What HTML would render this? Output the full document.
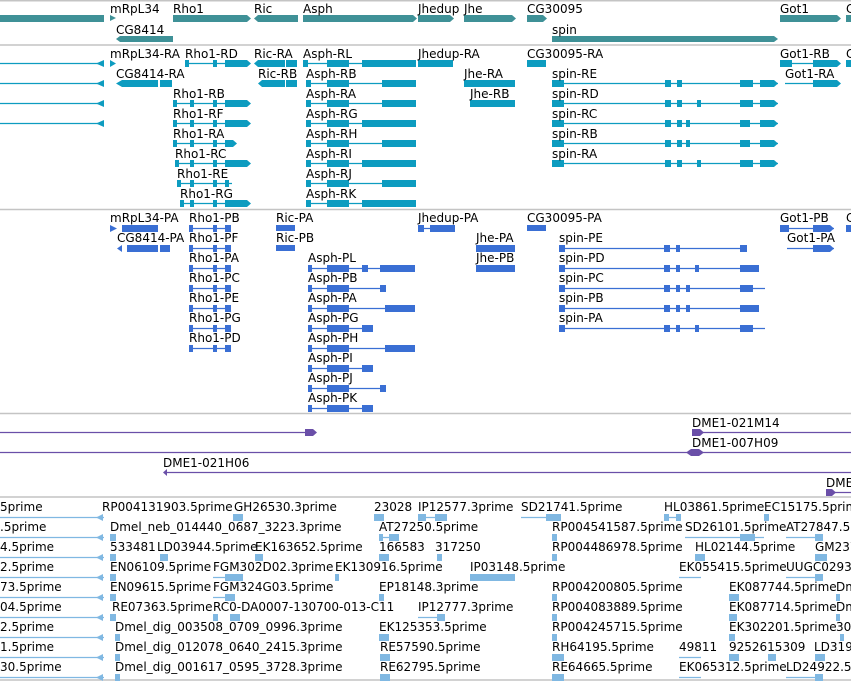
<!DOCTYPE html>
<html><head><meta charset="utf-8"><style>
html,body{margin:0;padding:0;background:#fff;width:851px;height:681px;overflow:hidden}
svg{display:block}
text{font-family:"DejaVu Sans","Liberation Sans",sans-serif;font-size:12px;fill:#000}
</style></head><body>
<svg width="851" height="681" viewBox="0 0 851 681" xmlns="http://www.w3.org/2000/svg">
<g stroke="#c4c4c4" stroke-width="1.5">
<line x1="0" y1="0.75" x2="851" y2="0.75"/><line x1="0" y1="45" x2="851" y2="45"/>
<line x1="0" y1="209.5" x2="851" y2="209.5"/><line x1="0" y1="413.5" x2="851" y2="413.5"/>
<line x1="0" y1="497" x2="851" y2="497"/><line x1="0" y1="680" x2="851" y2="680"/>
</g>
<!-- GENES -->
<g fill="#3f9197">
<rect x="0" y="15" width="104" height="7"/>
<polygon points="110,15 116,18 110,21"/>
<polygon points="173,15 247,15 251,18.5 247,22 173,22"/>
<polygon points="258,15 298,15 298,22 258,22 254,18.5"/>
<polygon points="303,15 413,15 417,18.5 413,22 303,22"/>
<polygon points="418,15 450,15 454,18.5 450,22 418,22"/>
<polygon points="464,15 512,15 516,18.5 512,22 464,22"/>
<polygon points="527,15 543,15 547,18.5 543,22 527,22"/>
<polygon points="780,15 837,15 841,18.5 837,22 780,22"/>
<rect x="846" y="15" width="5" height="7"/>
<polygon points="120,36 173,36 173,42 120,42 116,39"/>
<polygon points="552,36 774,36 778,39 774,42 552,42"/>
</g>
<text x="110" y="13">mRpL34</text><text x="173" y="13">Rho1</text><text x="254" y="13">Ric</text>
<text x="303" y="13">Asph</text><text x="418" y="13">Jhedup</text><text x="464" y="13">Jhe</text>
<text x="527" y="13">CG30095</text><text x="780" y="13">Got1</text><text x="846" y="13">C</text>
<text x="116" y="34">CG8414</text><text x="552" y="34">spin</text>
<!-- TRANSCRIPTS -->
<g stroke="#0d9cc0" stroke-width="1.2">
<line x1="0" y1="63.5" x2="102" y2="63.5"/><line x1="0" y1="83.5" x2="102" y2="83.5"/>
<line x1="0" y1="103.5" x2="102" y2="103.5"/><line x1="0" y1="123.5" x2="102" y2="123.5"/>
<line x1="185" y1="63.5" x2="250" y2="63.5"/>
<line x1="173" y1="103.5" x2="250" y2="103.5"/><line x1="173" y1="123.5" x2="250" y2="123.5"/>
<line x1="173" y1="143.5" x2="236" y2="143.5"/><line x1="175" y1="163.5" x2="250" y2="163.5"/>
<line x1="177" y1="183.5" x2="232" y2="183.5"/><line x1="180" y1="203.5" x2="250" y2="203.5"/>
<line x1="303" y1="63.5" x2="416" y2="63.5"/>
<line x1="306" y1="83.5" x2="416" y2="83.5"/><line x1="306" y1="103.5" x2="416" y2="103.5"/>
<line x1="306" y1="123.5" x2="416" y2="123.5"/><line x1="306" y1="143.5" x2="416" y2="143.5"/>
<line x1="306" y1="163.5" x2="416" y2="163.5"/><line x1="306" y1="183.5" x2="416" y2="183.5"/>
<line x1="306" y1="203.5" x2="416" y2="203.5"/>
<line x1="418" y1="63.5" x2="453" y2="63.5"/>
<line x1="464" y1="83.5" x2="515" y2="83.5"/><line x1="470" y1="103.5" x2="515" y2="103.5"/>
<line x1="527" y1="63.5" x2="546" y2="63.5"/>
<line x1="552" y1="83.5" x2="778" y2="83.5"/><line x1="552" y1="103.5" x2="778" y2="103.5"/>
<line x1="552" y1="123.5" x2="778" y2="123.5"/><line x1="552" y1="143.5" x2="778" y2="143.5"/>
<line x1="552" y1="163.5" x2="778" y2="163.5"/>
<line x1="780" y1="63.5" x2="840" y2="63.5"/><line x1="785" y1="83.5" x2="840" y2="83.5"/>
</g>
<g fill="#0d9cc0">
<polygon points="96,63.5 104,60 104,67"/><polygon points="96,83.5 104,80 104,87"/>
<polygon points="96,103.5 104,100 104,107"/><polygon points="96,123.5 104,120 104,127"/>
<polygon points="110,60 116,63.5 110,67"/>
<rect x="122" y="80" width="36" height="7"/><polygon points="116,83.5 122,80 122,87"/><rect x="160" y="80" width="12" height="7"/>
<polygon points="225,60 247,60 251,63.5 247,67 225,67"/><polygon points="225,100 247,100 251,103.5 247,107 225,107"/>
<polygon points="225,120 247,120 251,123.5 247,127 225,127"/><polygon points="225,140 233,140 237,143.5 233,147 225,147"/>
<polygon points="225,160 247,160 251,163.5 247,167 225,167"/><polygon points="225,200 247,200 251,203.5 247,207 225,207"/>
<polygon points="258,60 285,60 285,67 258,67 254,63.5"/><rect x="286" y="60" width="11" height="7"/>
<polygon points="262,80 285,80 285,87 262,87 258,83.5"/><rect x="286" y="80" width="11" height="7"/>
<rect x="418" y="60" width="35" height="7"/>
<rect x="527" y="60" width="19" height="7"/>
<rect x="464" y="80" width="51" height="7"/><rect x="470" y="100" width="45" height="7"/>
<rect x="780" y="60" width="12" height="7"/><polygon points="813,60 837,60 841,63.5 837,67 813,67"/>
<polygon points="813,80 837,80 841,83.5 837,87 813,87"/>
<rect x="846" y="60" width="5" height="7"/>
</g>
<g fill="#0d9cc0">
<!-- Asph exons -->
<rect x="303" y="60" width="5" height="7"/><rect x="327" y="60" width="22" height="7"/><rect x="362" y="60" width="54" height="7"/>
<rect x="306" y="80" width="5" height="7"/><rect x="327" y="80" width="22" height="7"/><rect x="382" y="80" width="34" height="7"/>
<rect x="306" y="100" width="5" height="7"/><rect x="327" y="100" width="22" height="7"/><rect x="382" y="100" width="34" height="7"/>
<rect x="306" y="120" width="5" height="7"/><rect x="327" y="120" width="22" height="7"/><rect x="362" y="120" width="54" height="7"/>
<rect x="306" y="140" width="5" height="7"/><rect x="327" y="140" width="22" height="7"/><rect x="382" y="140" width="34" height="7"/>
<rect x="306" y="160" width="5" height="7"/><rect x="327" y="160" width="22" height="7"/><rect x="362" y="160" width="54" height="7"/>
<rect x="306" y="180" width="5" height="7"/><rect x="327" y="180" width="22" height="7"/><rect x="382" y="180" width="34" height="7"/>
<rect x="306" y="200" width="5" height="7"/><rect x="327" y="200" width="22" height="7"/><rect x="362" y="200" width="54" height="7"/>
<!-- spin exons -->
<rect x="552" y="80" width="12" height="7"/><rect x="665" y="80" width="6" height="7"/><rect x="677" y="80" width="5" height="7"/><rect x="740" y="80" width="13" height="7"/><polygon points="760,80 774,80 778,83.5 774,87 760,87"/>
<rect x="552" y="100" width="12" height="7"/><rect x="665" y="100" width="6" height="7"/><rect x="677" y="100" width="5" height="7"/><rect x="697" y="100" width="4" height="7"/><rect x="740" y="100" width="13" height="7"/><polygon points="760,100 774,100 778,103.5 774,107 760,107"/>
<rect x="552" y="120" width="12" height="7"/><rect x="665" y="120" width="6" height="7"/><rect x="677" y="120" width="5" height="7"/><rect x="686" y="120" width="4" height="7"/><rect x="740" y="120" width="10" height="7"/><polygon points="760,120 774,120 778,123.5 774,127 760,127"/>
<rect x="552" y="140" width="12" height="7"/><rect x="665" y="140" width="6" height="7"/><rect x="677" y="140" width="5" height="7"/><rect x="686" y="140" width="4" height="7"/><rect x="740" y="140" width="10" height="7"/><polygon points="760,140 774,140 778,143.5 774,147 760,147"/>
<rect x="552" y="160" width="12" height="7"/><rect x="665" y="160" width="6" height="7"/><rect x="677" y="160" width="5" height="7"/><rect x="697" y="160" width="4" height="7"/><rect x="740" y="160" width="13" height="7"/><polygon points="760,160 774,160 778,163.5 774,167 760,167"/>
<!-- Rho exons -->
<rect x="173" y="100" width="4" height="7"/><rect x="190" y="100" width="4" height="7"/><rect x="213" y="100" width="4" height="7"/>
<rect x="173" y="120" width="4" height="7"/><rect x="190" y="120" width="4" height="7"/><rect x="213" y="120" width="4" height="7"/>
<rect x="173" y="140" width="4" height="7"/><rect x="190" y="140" width="4" height="7"/><rect x="213" y="140" width="4" height="7"/>
<rect x="175" y="160" width="4" height="7"/><rect x="190" y="160" width="4" height="7"/><rect x="213" y="160" width="4" height="7"/>
<rect x="177" y="180" width="4" height="7"/><rect x="190" y="180" width="4" height="7"/><rect x="213" y="180" width="4" height="7"/><rect x="225" y="180" width="4" height="7"/>
<rect x="180" y="200" width="4" height="7"/><rect x="190" y="200" width="4" height="7"/><rect x="213" y="200" width="4" height="7"/>
<rect x="185" y="60" width="4" height="7"/><rect x="213" y="60" width="4" height="7"/>
</g>
<text x="110" y="58">mRpL34-RA</text><text x="185" y="58">Rho1-RD</text><text x="254" y="58">Ric-RA</text>
<text x="303" y="58">Asph-RL</text><text x="418" y="58">Jhedup-RA</text><text x="527" y="58">CG30095-RA</text>
<text x="780" y="58">Got1-RB</text><text x="846" y="58">C</text>
<text x="116" y="78">CG8414-RA</text><text x="258" y="78">Ric-RB</text><text x="306" y="78">Asph-RB</text>
<text x="464" y="78">Jhe-RA</text><text x="552" y="78">spin-RE</text><text x="785" y="78">Got1-RA</text>
<text x="173" y="98">Rho1-RB</text><text x="306" y="98">Asph-RA</text><text x="470" y="98">Jhe-RB</text><text x="552" y="98">spin-RD</text>
<text x="173" y="118">Rho1-RF</text><text x="306" y="118">Asph-RG</text><text x="552" y="118">spin-RC</text>
<text x="173" y="138">Rho1-RA</text><text x="306" y="138">Asph-RH</text><text x="552" y="138">spin-RB</text>
<text x="175" y="158">Rho1-RC</text><text x="306" y="158">Asph-RI</text><text x="552" y="158">spin-RA</text>
<text x="177" y="178">Rho1-RE</text><text x="306" y="178">Asph-RJ</text>
<text x="180" y="198">Rho1-RG</text><text x="306" y="198">Asph-RK</text>
<!-- PROTEINS -->
<g stroke="#3a6fd4" stroke-width="1.2">
<line x1="189" y1="228.5" x2="231" y2="228.5"/><line x1="189" y1="248.5" x2="231" y2="248.5"/>
<line x1="189" y1="268.5" x2="231" y2="268.5"/><line x1="189" y1="288.5" x2="231" y2="288.5"/>
<line x1="189" y1="308.5" x2="231" y2="308.5"/><line x1="189" y1="328.5" x2="231" y2="328.5"/>
<line x1="189" y1="348.5" x2="231" y2="348.5"/>
<line x1="308" y1="268.5" x2="415" y2="268.5"/><line x1="308" y1="288.5" x2="386" y2="288.5"/>
<line x1="308" y1="308.5" x2="415" y2="308.5"/><line x1="308" y1="328.5" x2="373" y2="328.5"/>
<line x1="308" y1="348.5" x2="415" y2="348.5"/><line x1="308" y1="368.5" x2="373" y2="368.5"/>
<line x1="308" y1="388.5" x2="386" y2="388.5"/><line x1="308" y1="408.5" x2="373" y2="408.5"/>
<line x1="418" y1="228.5" x2="455" y2="228.5"/>
<line x1="559" y1="248.5" x2="747" y2="248.5"/><line x1="559" y1="268.5" x2="759" y2="268.5"/>
<line x1="559" y1="288.5" x2="765" y2="288.5"/><line x1="559" y1="308.5" x2="759" y2="308.5"/>
<line x1="559" y1="328.5" x2="765" y2="328.5"/>
<line x1="780" y1="228.5" x2="834" y2="228.5"/><line x1="787" y1="248.5" x2="834" y2="248.5"/>
</g>
<g fill="#3a6fd4">
<polygon points="110,225 117,228.5 110,232"/>
<rect x="122" y="225" width="36" height="7"/><polygon points="117,228.5 122,225 122,232" transform="translate(0,20)"/><rect x="160" y="245" width="10" height="7"/>
<rect x="127" y="245" width="31" height="7"/>
<rect x="276" y="225" width="19" height="6"/><rect x="276" y="245" width="19" height="6"/>
<rect x="418" y="225" width="6" height="7"/><rect x="430" y="225" width="25" height="7"/>
<rect x="527" y="225" width="19" height="6"/>
<rect x="476" y="245" width="39" height="7"/><rect x="476" y="265" width="39" height="7"/>
<rect x="780" y="225" width="9" height="7"/><polygon points="813,225 830,225 834,228.5 830,232 813,232"/>
<polygon points="813,245 830,245 834,248.5 830,252 813,252"/><rect x="846" y="225" width="5" height="7"/>
</g>
<g fill="#3a6fd4">
<rect x="189" y="225" width="4" height="7"/><rect x="213" y="225" width="4" height="7"/><rect x="225" y="225" width="6" height="7"/>
<rect x="189" y="245" width="4" height="7"/><rect x="213" y="245" width="4" height="7"/><rect x="225" y="245" width="6" height="7"/>
<rect x="189" y="265" width="4" height="7"/><rect x="213" y="265" width="4" height="7"/><rect x="225" y="265" width="6" height="7"/>
<rect x="189" y="285" width="4" height="7"/><rect x="213" y="285" width="4" height="7"/><rect x="225" y="285" width="6" height="7"/>
<rect x="189" y="305" width="4" height="7"/><rect x="213" y="305" width="4" height="7"/><rect x="225" y="305" width="6" height="7"/>
<rect x="189" y="325" width="4" height="7"/><rect x="213" y="325" width="4" height="7"/><rect x="225" y="325" width="6" height="7"/>
<rect x="189" y="345" width="4" height="7"/><rect x="213" y="345" width="4" height="7"/><rect x="225" y="345" width="6" height="7"/>
<rect x="308" y="265" width="4" height="7"/><rect x="327" y="265" width="22" height="7"/><rect x="362" y="265" width="6" height="7"/><rect x="380" y="265" width="35" height="7"/>
<rect x="308" y="285" width="4" height="7"/><rect x="327" y="285" width="22" height="7"/><rect x="380" y="285" width="6" height="7"/>
<rect x="308" y="305" width="4" height="7"/><rect x="327" y="305" width="22" height="7"/><rect x="385" y="305" width="30" height="7"/>
<rect x="308" y="325" width="4" height="7"/><rect x="327" y="325" width="22" height="7"/><rect x="362" y="325" width="11" height="7"/>
<rect x="308" y="345" width="4" height="7"/><rect x="327" y="345" width="22" height="7"/><rect x="385" y="345" width="30" height="7"/>
<rect x="308" y="365" width="4" height="7"/><rect x="327" y="365" width="22" height="7"/><rect x="362" y="365" width="11" height="7"/>
<rect x="308" y="385" width="4" height="7"/><rect x="327" y="385" width="22" height="7"/><rect x="380" y="385" width="6" height="7"/>
<rect x="308" y="405" width="4" height="7"/><rect x="327" y="405" width="22" height="7"/><rect x="362" y="405" width="11" height="7"/>
<rect x="559" y="245" width="6" height="7"/><rect x="664" y="245" width="6" height="7"/><rect x="676" y="245" width="4" height="7"/><rect x="740" y="245" width="7" height="7"/>
<rect x="559" y="265" width="6" height="7"/><rect x="664" y="265" width="6" height="7"/><rect x="676" y="265" width="4" height="7"/><rect x="695" y="265" width="4" height="7"/><rect x="740" y="265" width="19" height="7"/>
<rect x="559" y="285" width="6" height="7"/><rect x="664" y="285" width="6" height="7"/><rect x="676" y="285" width="4" height="7"/><rect x="686" y="285" width="4" height="7"/><rect x="740" y="285" width="13" height="7"/>
<rect x="559" y="305" width="6" height="7"/><rect x="664" y="305" width="6" height="7"/><rect x="676" y="305" width="4" height="7"/><rect x="686" y="305" width="4" height="7"/><rect x="740" y="305" width="19" height="7"/>
<rect x="559" y="325" width="6" height="7"/><rect x="664" y="325" width="6" height="7"/><rect x="676" y="325" width="4" height="7"/><rect x="695" y="325" width="4" height="7"/><rect x="740" y="325" width="13" height="7"/>
</g>
<text x="110" y="222">mRpL34-PA</text><text x="189" y="222">Rho1-PB</text><text x="276" y="222">Ric-PA</text>
<text x="418" y="222">Jhedup-PA</text><text x="527" y="222">CG30095-PA</text><text x="780" y="222">Got1-PB</text><text x="846" y="222">C</text>
<text x="117" y="242">CG8414-PA</text><text x="189" y="242">Rho1-PF</text><text x="276" y="242">Ric-PB</text>
<text x="476" y="242">Jhe-PA</text><text x="559" y="242">spin-PE</text><text x="787" y="242">Got1-PA</text>
<text x="189" y="262">Rho1-PA</text><text x="308" y="262">Asph-PL</text><text x="476" y="262">Jhe-PB</text><text x="559" y="262">spin-PD</text>
<text x="189" y="282">Rho1-PC</text><text x="308" y="282">Asph-PB</text><text x="559" y="282">spin-PC</text>
<text x="189" y="302">Rho1-PE</text><text x="308" y="302">Asph-PA</text><text x="559" y="302">spin-PB</text>
<text x="189" y="322">Rho1-PG</text><text x="308" y="322">Asph-PG</text><text x="559" y="322">spin-PA</text>
<text x="189" y="342">Rho1-PD</text><text x="308" y="342">Asph-PH</text>
<text x="308" y="362">Asph-PI</text><text x="308" y="382">Asph-PJ</text><text x="308" y="402">Asph-PK</text>
<!-- CLONES -->
<g stroke="#6a4fa8" stroke-width="1.2">
<line x1="0" y1="432.5" x2="310" y2="432.5"/><line x1="692" y1="432.5" x2="851" y2="432.5"/>
<line x1="0" y1="452.5" x2="851" y2="452.5"/><line x1="165" y1="472.5" x2="851" y2="472.5"/>
<line x1="826" y1="492.5" x2="851" y2="492.5"/>
</g>
<g fill="#6a4fa8">
<polygon points="305,429 313,429 317,432.5 313,436 305,436"/>
<polygon points="692,429 700,429 704,432.5 700,436 692,436"/>
<polygon points="686,452.5 691,449 699,449 704,452.5 699,456 691,456"/>
<polygon points="163,472.5 167,469 167,476"/>
<polygon points="826,489 832,489 836,492.5 832,496 826,496"/>
</g>
<text x="692" y="427">DME1-021M14</text><text x="692" y="447">DME1-007H09</text>
<text x="163" y="467">DME1-021H06</text><text x="826" y="487">DME</text>
<!-- ESTs -->
<g stroke="#80b8e2" stroke-width="1.2">
<line x1="0" y1="517.5" x2="104" y2="517.5"/><line x1="0" y1="537.5" x2="104" y2="537.5"/>
<line x1="0" y1="557.5" x2="104" y2="557.5"/><line x1="0" y1="577.5" x2="104" y2="577.5"/>
<line x1="0" y1="597.5" x2="104" y2="597.5"/><line x1="0" y1="617.5" x2="104" y2="617.5"/>
<line x1="0" y1="637.5" x2="104" y2="637.5"/><line x1="0" y1="657.5" x2="104" y2="657.5"/>
<line x1="0" y1="677.5" x2="104" y2="677.5"/>
<line x1="521" y1="517.5" x2="560" y2="517.5"/><line x1="418" y1="517.5" x2="445" y2="517.5"/>
<line x1="664" y1="517.5" x2="681" y2="517.5"/>
<line x1="379" y1="537.5" x2="398" y2="537.5"/><line x1="685" y1="537.5" x2="764" y2="537.5"/>
<line x1="786" y1="537.5" x2="822" y2="537.5"/>
<line x1="213" y1="577.5" x2="240" y2="577.5"/><line x1="786" y1="577.5" x2="822" y2="577.5"/>
<line x1="679" y1="577.5" x2="701" y2="577.5"/>
<line x1="213" y1="597.5" x2="230" y2="597.5"/><line x1="418" y1="617.5" x2="445" y2="617.5"/>
<line x1="679" y1="657.5" x2="701" y2="657.5"/><line x1="679" y1="677.5" x2="701" y2="677.5"/>
<line x1="786" y1="677.5" x2="822" y2="677.5"/>
</g>
<g fill="#80b8e2">
<polygon points="96,517.5 103,514 103,521"/><polygon points="96,537.5 103,534 103,541"/><polygon points="96,557.5 103,554 103,561"/>
<polygon points="96,577.5 103,574 103,581"/><polygon points="96,597.5 103,594 103,601"/><polygon points="96,617.5 103,614 103,621"/>
<polygon points="96,637.5 103,634 103,641"/><polygon points="96,657.5 103,654 103,661"/><polygon points="96,677.5 103,674 103,681"/>
<rect x="233" y="514" width="10" height="7"/><rect x="374" y="514" width="10" height="7"/><rect x="418" y="514" width="8" height="7"/><rect x="435" y="514" width="12" height="7"/>
<rect x="546" y="514" width="15" height="7"/><rect x="664" y="514" width="5" height="7"/><rect x="676" y="514" width="5" height="7"/><rect x="764" y="514" width="5" height="7"/>
<rect x="110" y="534" width="6" height="7"/><rect x="379" y="534" width="4" height="7"/><rect x="389" y="534" width="10" height="7"/><rect x="552" y="534" width="5" height="7"/><rect x="740" y="534" width="15" height="7"/><rect x="815" y="534" width="8" height="7"/>
<rect x="110" y="554" width="6" height="7"/><rect x="160" y="554" width="8" height="7"/><rect x="255" y="554" width="8" height="7"/><rect x="379" y="554" width="10" height="7"/><rect x="437" y="554" width="5" height="7"/><rect x="552" y="554" width="5" height="7"/><rect x="695" y="554" width="10" height="7"/><rect x="815" y="554" width="12" height="7"/>
<rect x="110" y="574" width="6" height="7"/><rect x="225" y="574" width="18" height="7"/><rect x="335" y="574" width="4" height="7"/><rect x="470" y="574" width="45" height="7"/><rect x="815" y="574" width="8" height="7"/>
<rect x="110" y="594" width="6" height="7"/><rect x="225" y="594" width="10" height="7"/><rect x="379" y="594" width="5" height="7"/><rect x="552" y="594" width="5" height="7"/><rect x="729" y="594" width="10" height="7"/><rect x="836" y="594" width="4" height="7"/>
<rect x="110" y="614" width="6" height="7"/><rect x="213" y="614" width="5" height="7"/><rect x="230" y="614" width="10" height="7"/><rect x="437" y="614" width="8" height="7"/><rect x="552" y="614" width="5" height="7"/><rect x="729" y="614" width="8" height="7"/><rect x="836" y="614" width="4" height="7"/>
<rect x="115" y="634" width="5" height="7"/><rect x="379" y="634" width="10" height="7"/><rect x="552" y="634" width="5" height="7"/><rect x="729" y="634" width="6" height="7"/><rect x="840" y="634" width="4" height="7"/>
<rect x="115" y="654" width="5" height="7"/><rect x="380" y="654" width="10" height="7"/><rect x="552" y="654" width="12" height="7"/><rect x="729" y="654" width="10" height="7"/><rect x="768" y="654" width="8" height="7"/><rect x="815" y="654" width="10" height="7"/>
<rect x="115" y="674" width="5" height="7"/><rect x="380" y="674" width="10" height="7"/><rect x="552" y="674" width="12" height="7"/><rect x="815" y="674" width="8" height="7"/>
</g>
<text x="0" y="511">5prime</text><text x="102" y="511">RP004131903.5prime</text><text x="234" y="511">GH26530.3prime</text><text x="374" y="511">23028</text><text x="418" y="511">IP12577.3prime</text><text x="521" y="511">SD21741.5prime</text><text x="664" y="511">HL03861.5prime</text><text x="764" y="511">EC15175.5prime</text>
<text x="0" y="531">.5prime</text><text x="110" y="531">Dmel_neb_014440_0687_3223.3prime</text><text x="379" y="531">AT27250.5prime</text><text x="552" y="531">RP004541587.5prime</text><text x="685" y="531">SD26101.5prime</text><text x="786" y="531">AT27847.5prime</text>
<text x="0" y="551">4.5prime</text><text x="110" y="551">533481</text><text x="157" y="551">LD03944.5prime</text><text x="255" y="551">EK163652.5prime</text><text x="379" y="551">166583</text><text x="435" y="551">317250</text><text x="552" y="551">RP004486978.5prime</text><text x="695" y="551">HL02144.5prime</text><text x="815" y="551">GM237</text>
<text x="0" y="571">2.5prime</text><text x="110" y="571">EN06109.5prime</text><text x="213" y="571">FGM302D02.3prime</text><text x="335" y="571">EK130916.5prime</text><text x="470" y="571">IP03148.5prime</text><text x="679" y="571">EK055415.5prime</text><text x="786" y="571">UUGC0293</text>
<text x="0" y="591">73.5prime</text><text x="110" y="591">EN09615.5prime</text><text x="213" y="591">FGM324G03.5prime</text><text x="379" y="591">EP18148.3prime</text><text x="552" y="591">RP004200805.5prime</text><text x="729" y="591">EK087744.5prime</text><text x="836" y="591">Dm</text>
<text x="0" y="611">04.5prime</text><text x="112" y="611">RE07363.5prime</text><text x="213" y="611">RC0-DA0007-130700-013-C11</text><text x="418" y="611">IP12777.3prime</text><text x="552" y="611">RP004083889.5prime</text><text x="729" y="611">EK087714.5prime</text><text x="836" y="611">Dm</text>
<text x="0" y="631">2.5prime</text><text x="115" y="631">Dmel_dig_003508_0709_0996.3prime</text><text x="379" y="631">EK125353.5prime</text><text x="552" y="631">RP004245715.5prime</text><text x="729" y="631">EK302201.5prime</text><text x="836" y="631">30</text>
<text x="0" y="651">1.5prime</text><text x="115" y="651">Dmel_dig_012078_0640_2415.3prime</text><text x="380" y="651">RE57590.5prime</text><text x="552" y="651">RH64195.5prime</text><text x="679" y="651">49811</text><text x="729" y="651">9252615309</text><text x="814" y="651">LD319</text>
<text x="0" y="671">30.5prime</text><text x="115" y="671">Dmel_dig_001617_0595_3728.3prime</text><text x="380" y="671">RE62795.5prime</text><text x="552" y="671">RE64665.5prime</text><text x="679" y="671">EK065312.5prime</text><text x="786" y="671">LD24922.5</text>
</svg>
</body></html>
